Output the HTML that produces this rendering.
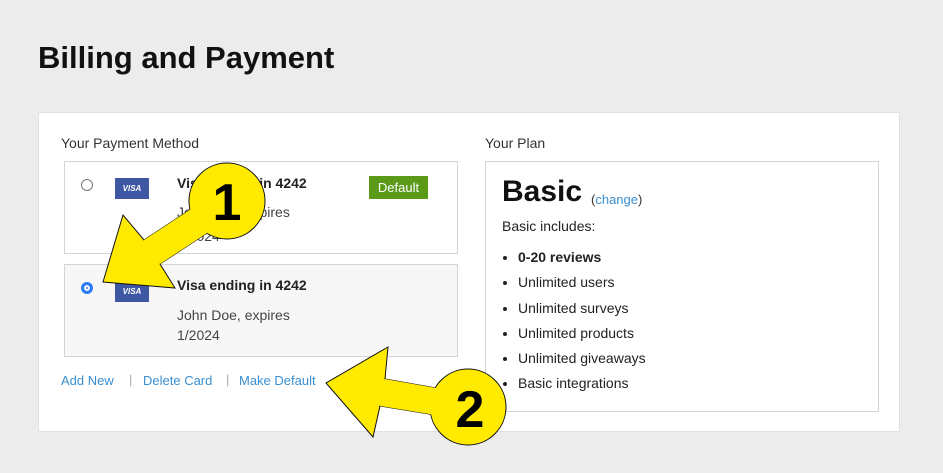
<!DOCTYPE html>
<html><head><style>
body{margin:0;width:943px;height:473px;background:#ececec;font-family:"Liberation Sans",sans-serif;color:#333;position:relative;overflow:hidden}
.a{position:absolute}
h1{position:absolute;left:38px;top:40px;margin:0;font-size:31px;font-weight:bold;color:#111}
.card{left:38px;top:112px;width:862px;height:320px;background:#fff;border:1px solid #e0e0e0;box-sizing:border-box}
.lbl{font-size:14px;color:#333}
.box{border:1px solid #d4d4d4;box-sizing:border-box}
.radio{width:12px;height:12px;border:1px solid #777;border-radius:50%;box-sizing:border-box;background:#fff}
.visa{width:34px;height:21px;background:#3d57a5;color:#fff;font-size:8px;font-weight:bold;font-style:italic;text-align:center;line-height:21px}
.b{font-weight:bold;font-size:14px;color:#222}
.t{font-size:14px;color:#444}
.lnk{font-size:13px;color:#3a8fd0}
li{margin:0;height:25.3px;font-size:14px;color:#222}
</style></head><body>
<h1>Billing and Payment</h1>
<div class="a card"></div>
<div class="a lbl" style="left:61px;top:135px">Your Payment Method</div>
<div class="a lbl" style="left:485px;top:135px">Your Plan</div>

<div class="a box" style="left:64px;top:161px;width:394px;height:93px;background:#fff"></div>
<div class="a radio" style="left:81px;top:179px"></div>
<div class="a visa" style="left:115px;top:178px">VISA</div>
<div class="a b" style="left:177px;top:175px">Visa ending in 4242</div>
<div class="a t" style="left:177px;top:204px">John Doe, expires</div>
<div class="a t" style="left:177px;top:228px">1/2024</div>
<div class="a" style="left:369px;top:176px;width:59px;height:23px;background:#5a9a18;color:#fff;font-size:13px;text-align:center;line-height:23px">Default</div>

<div class="a box" style="left:64px;top:264px;width:394px;height:93px;background:#f7f7f7"></div>
<div class="a radio" style="left:81px;top:282px;border:3px solid #2a7cf6;box-shadow:inset 0 0 0 2px #fff;background:#2a7cf6"></div>
<div class="a visa" style="left:115px;top:281px">VISA</div>
<div class="a b" style="left:177px;top:277px">Visa ending in 4242</div>
<div class="a t" style="left:177px;top:307px">John Doe, expires</div>
<div class="a t" style="left:177px;top:327px">1/2024</div>

<div class="a lnk" style="left:61px;top:373px">Add New</div>
<div class="a lnk" style="left:129px;top:372px;color:#aaa">|</div>
<div class="a lnk" style="left:143px;top:373px">Delete Card</div>
<div class="a lnk" style="left:226px;top:372px;color:#aaa">|</div>
<div class="a lnk" style="left:239px;top:373px">Make Default</div>

<div class="a box" style="left:485px;top:161px;width:394px;height:251px"></div>
<div class="a" style="left:502px;top:175px;font-size:30px;font-weight:bold;color:#111">Basic</div>
<div class="a" style="left:591px;top:192px;font-size:13px;color:#333">(<span style="color:#3a8fd0">change</span>)</div>
<div class="a t" style="left:502px;top:218px;color:#222">Basic includes:</div>
<ul class="a" style="left:500px;top:249px;margin:0;padding:0 0 0 18px">
<li><b>0-20 reviews</b></li><li>Unlimited users</li><li>Unlimited surveys</li><li>Unlimited products</li><li>Unlimited giveaways</li><li>Basic integrations</li>
</ul>

<svg class="a" style="left:0;top:0" width="943" height="473">
<g fill="#ffea00" stroke="#111" stroke-width="1">
<polygon points="123,215 103,282 175,288 160,264 236,214 220,190 144,240"/>
<circle cx="227" cy="201" r="38"/>
<polygon points="388,347 326,383 373,437 380,406 466,420 470,394 385,379"/>
<circle cx="468" cy="407" r="38"/>
</g>
<polygon points="236,214 220,190 144,240 160,264" fill="#ffea00"/>
<polygon points="466,420 470,394 385,379 380,406" fill="#ffea00"/>
<text x="227" y="220" text-anchor="middle" font-family="Liberation Sans" font-weight="bold" font-size="52" fill="#000">1</text>
<text x="470" y="427" text-anchor="middle" font-family="Liberation Sans" font-weight="bold" font-size="52" fill="#000">2</text>
</svg>
</body></html>
